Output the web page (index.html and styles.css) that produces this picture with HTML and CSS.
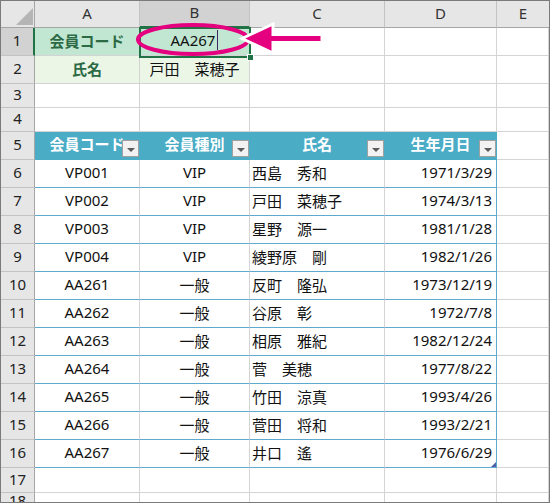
FILE: index.html
```html
<!DOCTYPE html>
<html lang="ja">
<head>
<meta charset="utf-8">
<title>Excel</title>
<link rel="stylesheet" href="styles.css">
</head>
<body>
<div class="sheet">
  <div class="corner"><span class="tri"></span></div>
  <div class="ch">A</div>
  <div class="ch sel">B</div>
  <div class="ch">C</div>
  <div class="ch">D</div>
  <div class="ch last">E</div>

  <div class="rh sel">1</div>
  <div class="c k1 ctr bold jp">会員コード</div>
  <div class="c k1 ctr">AA267<span class="caret"></span></div>
  <div class="c"></div><div class="c"></div><div class="c"></div>

  <div class="rh">2</div>
  <div class="c k2 ctr bold jp">氏名</div>
  <div class="c k2 ctr jp">戸田　菜穂子</div>
  <div class="c"></div><div class="c"></div><div class="c"></div>

  <div class="rh">3</div>
  <div class="c"></div><div class="c"></div><div class="c"></div><div class="c"></div><div class="c"></div>

  <div class="rh">4</div>
  <div class="c"></div><div class="c"></div><div class="c"></div><div class="c"></div><div class="c"></div>

  <div class="rh">5</div>
  <div class="th jp">会員コード<span class="fb"></span></div>
  <div class="th jp">会員種別<span class="fb"></span></div>
  <div class="th jp">氏名<span class="fb"></span></div>
  <div class="th jp">生年月日<span class="fb"></span></div>
  <div class="c"></div>

  <div class="rh">6</div>
  <div class="c tb ctr">VP001</div><div class="c tb ctr">VIP</div><div class="c tb lt jp">西島　秀和</div><div class="c tb rt end">1971/3/29</div><div class="c"></div>
  <div class="rh">7</div>
  <div class="c tb ctr">VP002</div><div class="c tb ctr">VIP</div><div class="c tb lt jp">戸田　菜穂子</div><div class="c tb rt end">1974/3/13</div><div class="c"></div>
  <div class="rh">8</div>
  <div class="c tb ctr">VP003</div><div class="c tb ctr">VIP</div><div class="c tb lt jp">星野　源一</div><div class="c tb rt end">1981/1/28</div><div class="c"></div>
  <div class="rh">9</div>
  <div class="c tb ctr">VP004</div><div class="c tb ctr">VIP</div><div class="c tb lt jp">綾野原　剛</div><div class="c tb rt end">1982/1/26</div><div class="c"></div>
  <div class="rh">10</div>
  <div class="c tb ctr">AA261</div><div class="c tb ctr jp">一般</div><div class="c tb lt jp">反町　隆弘</div><div class="c tb rt end">1973/12/19</div><div class="c"></div>
  <div class="rh">11</div>
  <div class="c tb ctr">AA262</div><div class="c tb ctr jp">一般</div><div class="c tb lt jp">谷原　彰</div><div class="c tb rt end">1972/7/8</div><div class="c"></div>
  <div class="rh">12</div>
  <div class="c tb ctr">AA263</div><div class="c tb ctr jp">一般</div><div class="c tb lt jp">相原　雅紀</div><div class="c tb rt end">1982/12/24</div><div class="c"></div>
  <div class="rh">13</div>
  <div class="c tb ctr">AA264</div><div class="c tb ctr jp">一般</div><div class="c tb lt jp">菅　美穂</div><div class="c tb rt end">1977/8/22</div><div class="c"></div>
  <div class="rh">14</div>
  <div class="c tb ctr">AA265</div><div class="c tb ctr jp">一般</div><div class="c tb lt jp">竹田　涼真</div><div class="c tb rt end">1993/4/26</div><div class="c"></div>
  <div class="rh">15</div>
  <div class="c tb ctr">AA266</div><div class="c tb ctr jp">一般</div><div class="c tb lt jp">菅田　将和</div><div class="c tb rt end">1993/2/21</div><div class="c"></div>
  <div class="rh">16</div>
  <div class="c tb ctr">AA267</div><div class="c tb ctr jp">一般</div><div class="c tb lt jp">井口　遙</div><div class="c tb rt end">1976/6/29<span class="rz"></span></div><div class="c"></div>

  <div class="rh">17</div>
  <div class="c"></div><div class="c"></div><div class="c"></div><div class="c"></div><div class="c"></div>
  <div class="rh">18</div>
  <div class="c"></div><div class="c"></div><div class="c"></div><div class="c"></div><div class="c"></div>

  <div class="selbox"><span class="handle"></span></div>
  <svg class="mark" width="548" height="501" viewBox="0 0 548 501" xmlns="http://www.w3.org/2000/svg">
    <ellipse cx="192" cy="38.5" rx="55" ry="14.5" fill="none" stroke="#e4007f" stroke-width="4"/>
    <path d="M241 37.5 L272 23 L272 33.5 L321 33.5 L321 41.5 L272 41.5 L272 52 Z" fill="#e4007f" stroke="#ffffff" stroke-width="3" stroke-linejoin="miter"/>
  </svg>
</div>
</body>
</html>
```
FILE: styles.css
```css
* { box-sizing: border-box; }
html, body { margin: 0; padding: 0; background: #ffffff; }

.sheet {
  position: relative;
  width: 550px;
  height: 503px;
  border: 1px solid #7a7a7a;
  display: grid;
  grid-template-columns: 34px 105px 110px 135px 112px 52px;
  grid-template-rows: 27px 28px 28px 24px 24px repeat(12, 28px) 25px 1fr;
  overflow: hidden;
  font-family: "Noto Sans", "Noto Sans CJK JP", sans-serif;
  font-size: 15px;
  color: #111;
}

.jp {
  font-family: "Noto Sans CJK JP", sans-serif;
  font-size: 15px;
}

.corner {
  position: relative;
  background: #e6e6e6;
  border-right: 1px solid #a6a6a6;
  border-bottom: 1px solid #a6a6a6;
}
.corner .tri {
  position: absolute;
  right: 1px;
  bottom: 2px;
  width: 0;
  height: 0;
  border-left: 17px solid transparent;
  border-bottom: 17px solid #b5b5b5;
}

.ch {
  background: #e6e6e6;
  border-right: 1px solid #c3c3c3;
  border-bottom: 1px solid #a6a6a6;
  display: flex;
  align-items: center;
  justify-content: center;
  padding-bottom: 2px;
  color: #333;
  line-height: 1;
}
.ch.sel { background: #d2d2d2; border-bottom: 2px solid #217346; }
.ch.last { border-right: none; }

.rh {
  background: #e6e6e6;
  border-right: 1px solid #a6a6a6;
  border-bottom: 1px solid #c3c3c3;
  display: flex;
  align-items: center;
  justify-content: center;
  padding-bottom: 2px;
  color: #222;
  line-height: 1;
}
.rh.sel { background: #d2d2d2; border-right: 2px solid #217346; }

.c {
  position: relative;
  border-right: 1px solid #d4d4d4;
  border-bottom: 1px solid #d4d4d4;
  display: flex;
  align-items: center;
  padding: 0 3px 3px;
  white-space: nowrap;
  line-height: 1;
}
.ctr { justify-content: center; }
.lt { justify-content: flex-start; padding-left: 2px; }
.rt { justify-content: flex-end; padding-right: 4px; }
.bold { font-weight: 700; color: #2b6a45; }

.k1 { background: #c1e7d2; }
.k2 { background: #ebf6e7; }

.caret {
  display: inline-block;
  width: 1px;
  height: 20px;
  margin-left: 2px;
  background: #3a2a66;
}

.th {
  position: relative;
  background: #4bacc6;
  border-right: 1px solid #4bacc6;
  border-bottom: 1px solid #4bacc6;
  color: #ffffff;
  font-weight: 700;
  display: flex;
  align-items: center;
  justify-content: center;
  padding-bottom: 4px;
  line-height: 1;
  white-space: nowrap;
}
.fb {
  position: absolute;
  right: 0;
  bottom: 2px;
  width: 17px;
  height: 17px;
  background: #f2f2f2;
  border: 1px solid #a0a0a0;
}
.fb::after {
  content: "";
  position: absolute;
  left: 4px;
  top: 7px;
  border-left: 4px solid transparent;
  border-right: 4px solid transparent;
  border-top: 4px solid #5a5a5a;
}

.tb { border-bottom: 1px solid #5ea9cf; }
.end { border-right: 1px solid #5ea9cf; }

.rz {
  position: absolute;
  right: 0;
  bottom: 0;
  width: 0;
  height: 0;
  border-left: 5px solid transparent;
  border-bottom: 5px solid #4f5fa8;
}

.selbox {
  position: absolute;
  left: 138px;
  top: 26px;
  width: 112px;
  height: 31px;
  border: 2px solid #217346;
  pointer-events: none;
}
.handle {
  position: absolute;
  right: -5px;
  bottom: -5px;
  width: 7px;
  height: 7px;
  background: #217346;
  border: 1px solid #ffffff;
}

.mark {
  position: absolute;
  left: 0;
  top: 0;
  pointer-events: none;
}
```
